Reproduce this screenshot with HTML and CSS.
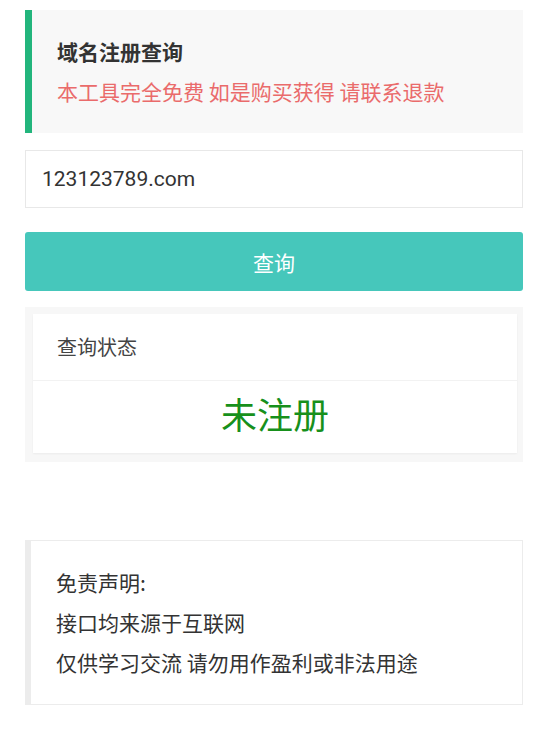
FILE: index.html
```html
<!DOCTYPE html>
<html lang="zh-CN">
<head>
    <meta charset="utf-8">
    <title>域名注册查询</title>
    <link rel="stylesheet" href="styles.css">
</head>
<body>
<div class="page">
    <div class="header">
        <div class="title">域名注册查询</div>
        <div class="notice">本工具完全免费 如是购买获得 请联系退款</div>
    </div>

    <input type="text" id="domain" class="domainInput" value="123123789.com">

    <button id="queryButton" class="queryButton">查询</button>

    <div class="result">
        <div class="resultCard">
            <div class="resultHead">查询状态</div>
            <div class="resultBody" id="status">未注册</div>
        </div>
    </div>

    <div class="disclaimer">
        <div>免责声明:</div>
        <div>接口均来源于互联网</div>
        <div>仅供学习交流 请勿用作盈利或非法用途</div>
    </div>
</div>
</body>
</html>
```

FILE: styles.css
```css
body {
    margin: 0;
    padding: 0;
    background: #ffffff;
    font-family: "Noto Sans CJK SC", "Noto Sans", sans-serif;
    color: #333333;
}

.page {
    display: flex;
    flex-direction: column;
    width: 498px;
    padding: 10px 14px 0 25px;
}

.header {
    display: flex;
    flex-direction: column;
    gap: 10px;
    background-color: #f8f8f8;
    border-left: 7px solid #22b57c;
    padding: 26px 20px 27px 25px;
}

.title {
    font-size: 21px;
    font-weight: bold;
    line-height: 30px;
    color: #333333;
}

.notice {
    font-size: 21px;
    line-height: 30px;
    color: #ea6b6b;
}

.domainInput {
    margin-top: 17px;
    height: 58px;
    padding: 0 16px;
    border: 1px solid #e8e8e8;
    box-sizing: border-box;
    font-family: Roboto, "Noto Sans", sans-serif;
    font-size: 21px;
    color: #333333;
    outline: none;
}

.queryButton {
    margin-top: 24px;
    height: 59px;
    border: none;
    border-radius: 3px;
    background-color: #46c7bb;
    color: #ffffff;
    font-family: "Noto Sans CJK SC", sans-serif;
    font-size: 21px;
    cursor: pointer;
}

.result {
    margin-top: 16px;
    background-color: #f7f7f7;
    padding: 7px 6px 9px 8px;
}

.resultCard {
    background-color: #ffffff;
    box-shadow: 0 1px 2px rgba(0, 0, 0, 0.05);
}

.resultHead {
    height: 66px;
    line-height: 66px;
    padding-left: 24px;
    font-size: 20px;
    color: #444444;
    border-bottom: 1px solid #f2f2f2;
}

.resultBody {
    height: 72px;
    line-height: 64px;
    text-align: center;
    font-size: 36px;
    color: #17901b;
}

.disclaimer {
    margin-top: 78px;
    border: 1px solid #ececec;
    border-left: 6px solid #ececec;
    padding: 21px 20px 22px 25px;
    font-size: 21px;
    line-height: 40px;
    color: #333333;
}
```
